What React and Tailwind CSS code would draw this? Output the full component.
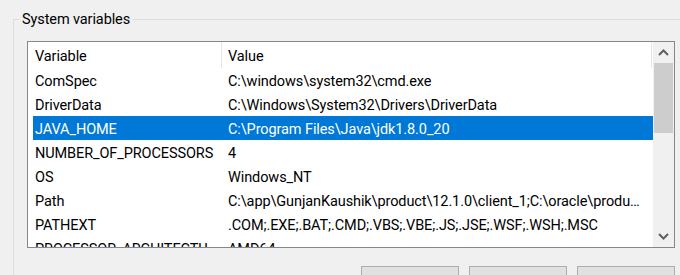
import React from 'react'

// Windows "Environment Variables" dialog — System variables group
const rows = [
    ['ComSpec', 'C:\\windows\\system32\\cmd.exe'],
    ['DriverData', 'C:\\Windows\\System32\\Drivers\\DriverData'],
    ['JAVA_HOME', 'C:\\Program Files\\Java\\jdk1.8.0_20'],
    ['NUMBER_OF_PROCESSORS', '4'],
    ['OS', 'Windows_NT'],
    ['Path', 'C:\\app\\GunjanKaushik\\product\\12.1.0\\client_1;C:\\oracle\\product\\12.1.0\\client_1\\bin;C:\\ProgramData\\Oracle\\Java\\javapath'],
    ['PATHEXT', '.COM;.EXE;.BAT;.CMD;.VBS;.VBE;.JS;.JSE;.WSF;.WSH;.MSC'],
    ['PROCESSOR_ARCHITECTURE', 'AMD64'],
]

const selected = 'JAVA_HOME'

function Chevron({ up }) {
    return (
        <svg width="11" height="7" viewBox="0 0 11 7">
            <path
                d={up ? 'M1 6 L5.5 1.5 L10 6' : 'M1 1 L5.5 5.5 L10 1'}
                fill="none"
                stroke="#606060"
                strokeWidth="2"
            />
        </svg>
    )
}

export default function App() {
    return (
        <div className="w-[680px] h-[275px] bg-[#f0f0f0] overflow-hidden pl-[13px] pt-[19px] text-[14.5px] tracking-[-0.1px] text-black font-['Roboto',_'Liberation_Sans',_sans-serif]">
            {/* Group box */}
            <div className="relative h-full border-l border-t border-[#dcdcdc] pl-[13px] pt-[21px]">
                <span className="absolute left-[5px] top-[-10px] px-[3px] bg-[#f0f0f0] leading-[20px]">
                    System variables
                </span>

                {/* List view */}
                <div className="w-[648px] h-[207px] border border-[#828790] bg-white flex">
                    <div className="flex-1 flex flex-col overflow-hidden">
                        {/* Header */}
                        <div className="h-[26px] flex shrink-0">
                            <div className="w-[193px] pl-[7px] pt-[3px] flex items-center">Variable</div>
                            <div className="w-px bg-[#e5e5e5]" />
                            <div className="w-[429px] pl-[6px] pt-[3px] flex items-center">Value</div>
                            <div className="w-px bg-[#e5e5e5]" />
                        </div>

                        {rows.map(([name, value]) => (
                            <div
                                key={name}
                                className={`ml-[5px] h-[24px] pt-[3px] shrink-0 flex items-center ${name === selected ? 'bg-[#0078d7] text-white' : ''}`}
                            >
                                <div className="w-[188px] pl-[2px] truncate">{name}</div>
                                <div className="flex-1 min-w-0 pl-[7px] pr-[12px] truncate">{value}</div>
                            </div>
                        ))}
                    </div>

                    {/* Scrollbar */}
                    <div className="w-[21px] bg-[#f0f0f0] flex flex-col">
                        <div className="h-[21px] flex items-center justify-center">
                            <Chevron up />
                        </div>
                        <div className="h-[70px] mx-[1px] bg-[#cdcdcd]" />
                        <div className="flex-1" />
                        <div className="h-[21px] flex items-center justify-center">
                            <Chevron />
                        </div>
                    </div>
                </div>

                {/* Buttons */}
                <div className="w-[648px] mt-[18px] flex justify-end gap-[10px]">
                    <button className="w-[98px] h-[34px] bg-[#e1e1e1] border border-[#adadad]">New...</button>
                    <button className="w-[98px] h-[34px] bg-[#e1e1e1] border border-[#adadad]">Edit...</button>
                    <button className="w-[98px] h-[34px] bg-[#e1e1e1] border border-[#adadad]">Delete</button>
                </div>
            </div>
        </div>
    )
}
